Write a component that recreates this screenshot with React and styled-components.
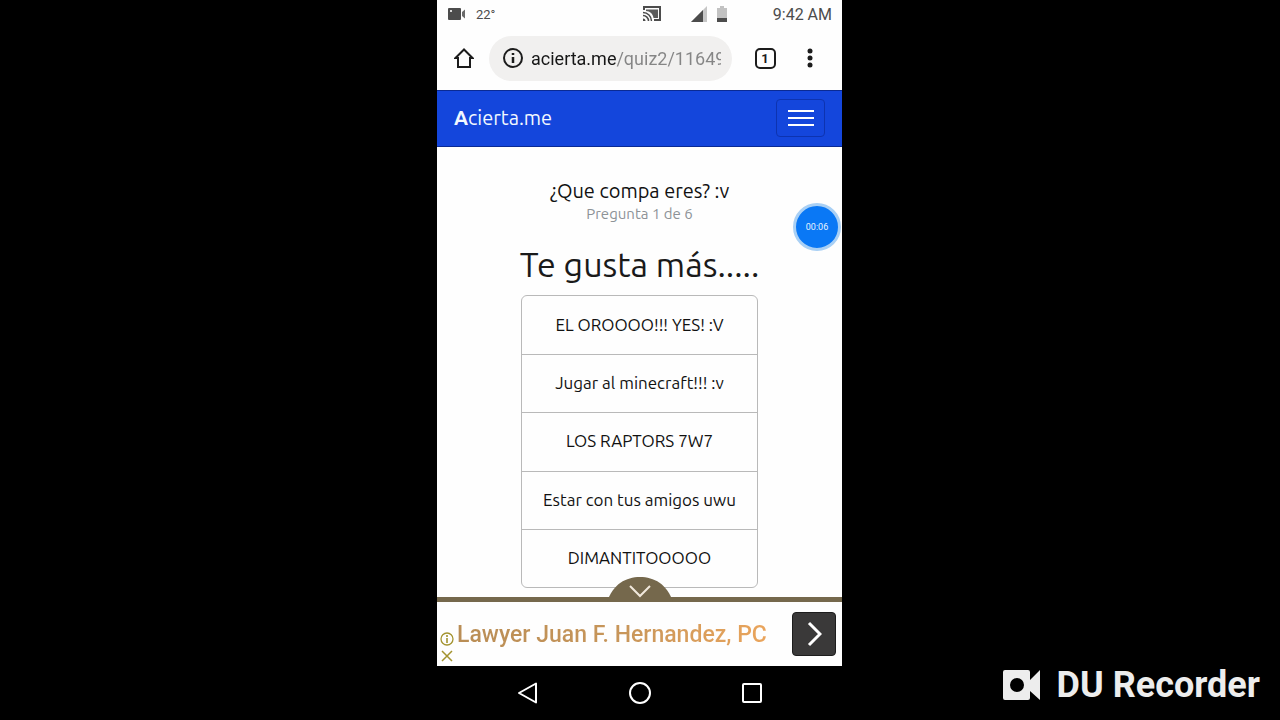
import { useState } from 'react';
import styled, { createGlobalStyle } from 'styled-components';

const answers = [
  'EL OROOOO!!! YES! :V',
  'Jugar al minecraft!!! :v',
  'LOS RAPTORS 7W7',
  'Estar con tus amigos uwu',
  'DIMANTITOOOOO',
];

function StatusBar() {
  return (
    <Status>
      <StatusGroup>
        <svg width="18" height="12" viewBox="0 0 18 12">
          <rect x="0" y="0" width="13" height="12" rx="1" fill="#4c4c4c" />
          <path d="M14 4 17 1.500v9L14 8z" fill="#6a6a6a" />
          <rect x="2" y="2" width="2" height="2" fill="#d8d8d8" />
        </svg>
        <Temp>22°</Temp>
      </StatusGroup>
      <StatusIcons>
        <svg width="18" height="16" viewBox="0 0 18 16" fill="none" stroke="#4c4c4c">
          <path d="M1 4V1h16v13h-6" strokeWidth="2" />
          <path d="M3 3.5h12v8.500h-4.500C10 8 7 5 3 5z" fill="#5c5c5c" stroke="none" />
          <path d="M0 6.500a8.500 8.500 0 0 1 8.500 8.500M0 9.500a5.500 5.500 0 0 1 5.500 5.500" strokeWidth="1.500" />
          <path d="M0 12.500A2.500 2.500 0 0 1 2.500 15H0z" fill="#4c4c4c" stroke="none" />
        </svg>
        <Signal width="16" height="16" viewBox="0 0 16 16">
          <path d="M0 16 16 0v16z" fill="#c6c6c6" />
          <path d="M0 16 12 4v12z" fill="#4c4c4c" />
        </Signal>
        <svg width="10" height="16" viewBox="0 0 10 16">
          <path d="M3 0h4v2h3v14H0V2h3z" fill="#c2c2c2" />
          <path d="M0 12h10v4H0z" fill="#4c4c4c" />
        </svg>
      </StatusIcons>
      <Clock>9:42 AM</Clock>
    </Status>
  );
}

function BrowserBar() {
  const [url, setUrl] = useState('acierta.me/quiz2/11649');

  return (
    <Toolbar>
      <IconButton aria-label="Inicio">
        <svg width="20" height="20" viewBox="0 0 20 20" fill="none" stroke="#1c1c1c" strokeWidth="2">
          <path d="M10 1.500 1.500 10H4v9h12v-9h2.500z" />
        </svg>
      </IconButton>
      <Address>
        <svg width="20" height="20" viewBox="0 0 20 20" fill="none" stroke="#1c1c1c" strokeWidth="2">
          <circle cx="10" cy="10" r="9" />
          <path d="M10 9v6M10 5v2" strokeWidth="2.500" />
        </svg>
        <AddressInput
          type="text"
          aria-label="Dirección"
          value={url}
          onChange={(e) => setUrl(e.target.value)}
        />
      </Address>
      <TabButton aria-label="Pestañas">
        <TabCount>1</TabCount>
      </TabButton>
      <IconButton aria-label="Más opciones">
        <svg width="6" height="20" viewBox="0 0 6 20" fill="#1c1c1c">
          <circle cx="3" cy="3" r="2.500" />
          <circle cx="3" cy="10" r="2.500" />
          <circle cx="3" cy="17" r="2.500" />
        </svg>
      </IconButton>
    </Toolbar>
  );
}

function App() {
  return (
    <>
      <GlobalStyle />
      <Screen>
        <Phone>
          <StatusBar />
          <BrowserBar />
          <Navbar>
            <Brand href="#"><b>A</b>cierta.me</Brand>
            <MenuButton aria-label="Menú">
              <svg width="26" height="18" viewBox="0 0 26 18" stroke="#fff" strokeWidth="2">
                <path d="M0 2h26M0 9h26M0 16h26" />
              </svg>
            </MenuButton>
          </Navbar>

          <Quiz>
            <QuizName>¿Que compa eres? :v</QuizName>
            <Progress>Pregunta 1 de 6</Progress>
            <Question>Te gusta más.....</Question>
            <AnswerList>
              {answers.map((answer) => (
                <Answer key={answer}>{answer}</Answer>
              ))}
            </AnswerList>
          </Quiz>

          <Ad>
            <AdHandle aria-label="Ocultar anuncio">
              <svg width="66" height="26" viewBox="0 0 66 26">
                <path d="M0 26C6 8 19 1 33 1s27 7 33 25z" fill="#75684c" />
                <path d="m23 10 10 10 10-10" fill="none" stroke="#f1e8dc" strokeWidth="2" />
              </svg>
            </AdHandle>
            <AdMarks>
              <svg width="14" height="14" viewBox="0 0 14 14" fill="none" stroke="#a3932f">
                <circle cx="7" cy="7" r="6" strokeWidth="1.300" />
                <path d="M7 6v5M7 3v2" strokeWidth="1.600" />
              </svg>
              <svg width="12" height="12" viewBox="0 0 12 12" stroke="#a3932f" strokeWidth="1.500">
                <path d="m1 1 10 10M11 1 1 11" />
              </svg>
            </AdMarks>
            <AdLink href="#">Lawyer Juan F. Hernandez, PC</AdLink>
            <AdButton aria-label="Abrir anuncio">
              <svg width="16" height="26" viewBox="0 0 16 26" fill="none" stroke="#fff" strokeWidth="3">
                <path d="m3 2 11 11L3 24" />
              </svg>
            </AdButton>
          </Ad>

          <SystemNav>
            <NavButton aria-label="Atrás">
              <svg width="22" height="22" viewBox="0 0 22 22" fill="none" stroke="#fff" strokeWidth="2">
                <path d="M19 1.500v19L2 11z" strokeLinejoin="round" />
              </svg>
            </NavButton>
            <NavButton aria-label="Inicio del teléfono">
              <svg width="22" height="22" viewBox="0 0 22 22" fill="none" stroke="#fff" strokeWidth="2">
                <circle cx="11" cy="11" r="10" />
              </svg>
            </NavButton>
            <NavButton aria-label="Recientes">
              <svg width="22" height="22" viewBox="0 0 22 22" fill="none" stroke="#fff" strokeWidth="2">
                <rect x="2" y="2" width="18" height="18" rx="1" />
              </svg>
            </NavButton>
          </SystemNav>

          {/* burbuja de grabación */}
          <RecordBubble>00:06</RecordBubble>
        </Phone>

        <Watermark>
          <svg width="38" height="30" viewBox="0 0 38 30" fill="#ededed">
            <path
              fillRule="evenodd"
              d="M2 0h23a2 2 0 0 1 2 2v8L37 0v30L27 21v7a2 2 0 0 1-2 2H2a2 2 0 0 1-2-2V2a2 2 0 0 1 2-2zm12 8a7 7 0 1 0 0 14 7 7 0 0 0 0-14z"
            />
          </svg>
          DU Recorder
        </Watermark>
      </Screen>
    </>
  );
}
export default App;

const GlobalStyle = createGlobalStyle`
  * { box-sizing: border-box; }
  body {
    margin: 0;
    background: #000;
    font-family: Roboto, sans-serif;
  }
  button {
    margin: 0;
    padding: 0;
    border: none;
    background: none;
    font: inherit;
    cursor: pointer;
  }
  svg { display: block; flex: none; }
`;

const Screen = styled.div`
  display: grid;
  grid-template-columns: minmax(0, 437fr) minmax(0, 405fr) minmax(0, 438fr);
  min-height: 100vh;
`;

const Phone = styled.div`
  grid-column: 2;
  position: relative;
  display: flex;
  flex-direction: column;
  background: #fefefe;
`;

const Status = styled.div`
  display: grid;
  grid-template-columns: 1fr auto 1fr;
  align-items: center;
  height: 28px;
  padding: 0 10px 0 11px;
  color: #4c4c4c;
`;

const StatusGroup = styled.div`
  display: flex;
  align-items: center;
  gap: 10px;
`;

const Temp = styled.span`
  font-size: 13px;
`;

const StatusIcons = styled.div`
  display: flex;
  align-items: center;
  gap: 10px;
  padding-left: 90px;
`;

const Signal = styled.svg`
  margin-left: 20px;
`;

const Clock = styled.span`
  text-align: right;
  font-size: 16px;
`;

const Toolbar = styled.div`
  display: flex;
  align-items: center;
  height: 62px;
  padding: 0 16px 2px 11px;
`;

const IconButton = styled.button`
  display: flex;
  align-items: center;
  justify-content: center;
  width: 32px;
  height: 44px;
`;

const Address = styled.label`
  display: flex;
  align-items: center;
  flex: 1;
  gap: 8px;
  min-width: 0;
  height: 45px;
  margin-left: 9px;
  padding: 0 11px 0 14px;
  border-radius: 23px;
  background: #f1f0ef;
`;

/* dominio en negro, ruta en gris */
const AddressInput = styled.input`
  flex: 1;
  min-width: 0;
  padding: 0;
  border: none;
  outline: none;
  background: linear-gradient(90deg, #161616 85px, #858585 85px);
  background-clip: text;
  -webkit-text-fill-color: transparent;
  font-family: Roboto, sans-serif;
  font-size: 18px;
`;

const TabButton = styled(IconButton)`
  width: 44px;
  margin: 0 7px 0 11px;
`;

const TabCount = styled.span`
  width: 21px;
  height: 21px;
  border: 2px solid #1c1c1c;
  border-radius: 5px;
  color: #1c1c1c;
  font-size: 13px;
  font-weight: 700;
  line-height: 17px;
`;

const Navbar = styled.nav`
  display: flex;
  align-items: center;
  justify-content: space-between;
  height: 57px;
  padding: 0 17px 2px;
  border-top: 1px solid #0a2a94;
  border-bottom: 1px solid #0a2a94;
  background: #1446dc;
`;

const Brand = styled.a`
  color: #f2f8ff;
  font-family: Ubuntu, "Noto Sans", sans-serif;
  font-size: 20px;
  text-decoration: none;
`;

const MenuButton = styled.button`
  display: flex;
  align-items: center;
  justify-content: center;
  width: 49px;
  height: 38px;
  border: 1px solid #0d33b0;
  border-radius: 4px;
`;

const Quiz = styled.main`
  display: flex;
  flex: 1;
  flex-direction: column;
  align-items: center;
  padding-top: 31px;
  font-family: Ubuntu, "Noto Sans", sans-serif;
`;

const QuizName = styled.h2`
  margin: 0;
  color: #111;
  font-size: 20px;
  font-weight: 400;
  line-height: 26px;
`;

const Progress = styled.p`
  margin: 0;
  color: #8d9297;
  font-size: 15px;
  line-height: 20px;
`;

const Question = styled.h1`
  margin: 18px 0 9px;
  color: #1a1a1a;
  font-size: 34px;
  font-weight: 400;
  line-height: 44px;
`;

const AnswerList = styled.div`
  display: grid;
  grid-auto-rows: 1fr;
  min-height: 293px;
  border: 1px solid #b9b9b9;
  border-radius: 6px;
`;

const Answer = styled.button`
  padding: 0 21px 2px;
  border-top: 1px solid #b9b9b9;
  color: #111;
  font-size: 17px;

  &:first-child {
    border-top: none;
  }
`;

const Ad = styled.aside`
  position: relative;
  display: flex;
  align-items: center;
  height: 69px;
  padding: 0 6px 0 3px;
  border-top: 5px solid #75684c;
  background: #fefefe;
`;

const AdHandle = styled.button`
  position: absolute;
  bottom: 100%;
  left: 50%;
  transform: translateX(-50%);
`;

const AdMarks = styled.div`
  display: flex;
  flex-direction: column;
  align-items: center;
  align-self: flex-end;
  gap: 4px;
  padding-bottom: 4px;
`;

const AdLink = styled.a`
  flex: 1;
  margin-left: 3px;
  background: linear-gradient(90deg, #b98d55, #c8965a 50%, #f0a75c);
  background-clip: text;
  -webkit-text-fill-color: transparent;
  font-size: 23px;
  font-weight: 500;
  text-decoration: none;
  white-space: nowrap;
`;

const AdButton = styled.button`
  display: flex;
  align-items: center;
  justify-content: center;
  width: 44px;
  height: 44px;
  border: 1px solid #1d1d1d;
  border-radius: 4px;
  background: #3a3939;
`;

const SystemNav = styled.div`
  display: flex;
  align-items: center;
  justify-content: center;
  gap: 90px;
  height: 54px;
  background: #000;
`;

const NavButton = styled.button`
  display: flex;
`;

const RecordBubble = styled.button`
  position: absolute;
  top: 203px;
  right: 1px;
  width: 48px;
  height: 48px;
  border: 3px solid #a9d0f5;
  border-radius: 50%;
  background: #0a78f5;
  color: #e8f4ff;
  font-size: 9px;
`;

const Watermark = styled.div`
  display: flex;
  align-items: center;
  align-self: end;
  justify-content: flex-end;
  gap: 16px;
  padding: 0 20px 14px 0;
  color: #ededed;
  font-size: 36px;
  font-weight: 700;
  line-height: 42px;
`;
